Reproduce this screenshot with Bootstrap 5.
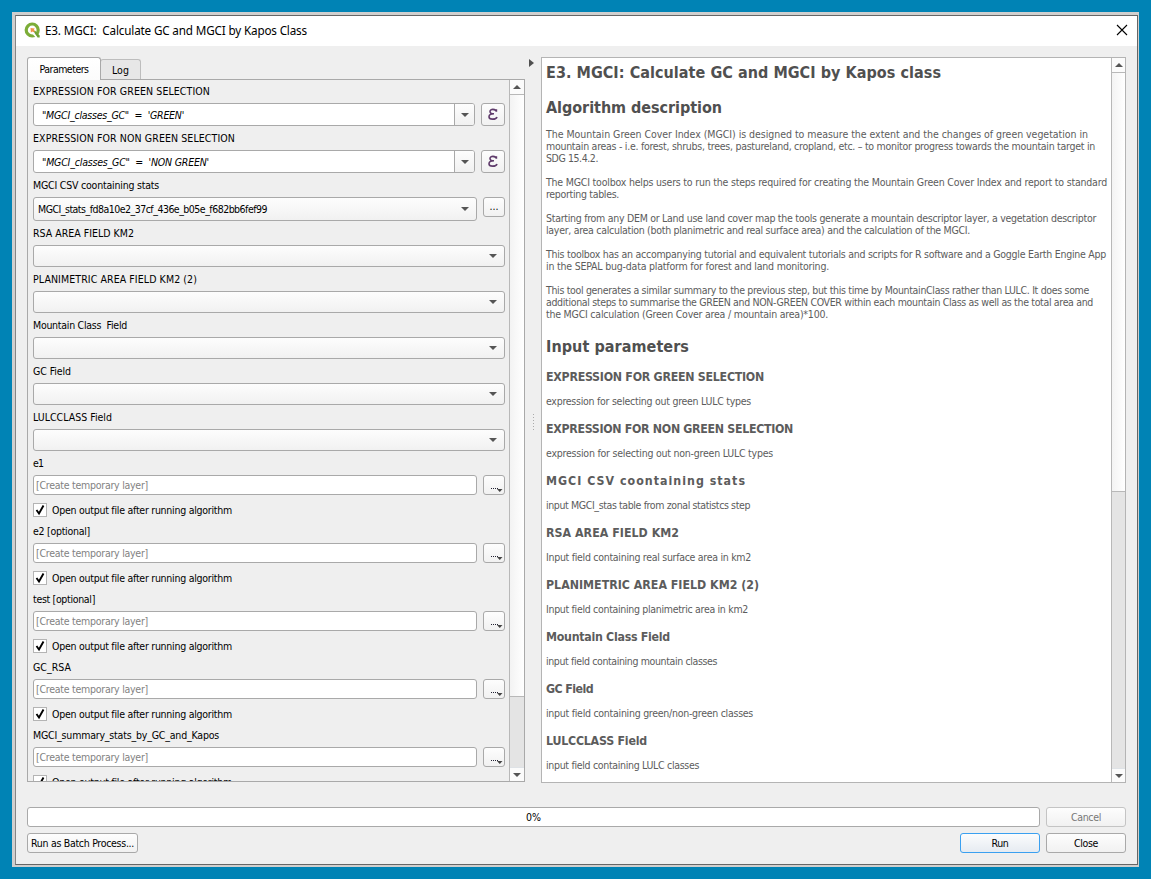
<!DOCTYPE html>
<html lang="en">
<head>
<meta charset="utf-8">
<title>E3. MGCI: Calculate GC and MGCI by Kapos Class</title>
<link href="https://cdn.jsdelivr.net/npm/bootstrap@5.3.0/dist/css/bootstrap.min.css" rel="stylesheet">
<script src="https://cdn.jsdelivr.net/npm/bootstrap@5.3.0/dist/js/bootstrap.bundle.min.js"></script>
<style>
:root{--edge:#a9a9a9;--face:#efefef;--grad:linear-gradient(#fdfdfd,#f1f1f1)}
body{background:#0083b5;font:10.5px/12px "DejaVu Sans Condensed","DejaVu Sans",sans-serif;color:#000;height:879px;padding:12px;overflow:hidden}
.frame{height:855px;border:solid #d0cfce;border-width:3px 1px 2px 3px}
.dialog-box{height:850px;background:var(--face);border:1px solid #666;border-left-color:#858585}
.title-strip{height:30px;background:#fff;padding:0 9px 2px 8px;font:11.7px/28px "Noto Sans","Open Sans",sans-serif}
[data-w]{white-space:pre}
.work{height:736px;padding:11px 11px 0 11px}
.left-side{width:498px}
.tab-item{border:1px solid var(--edge);border-bottom:0;border-radius:3px 3px 0 0;text-align:center}
.tab-item.on{width:74px;height:23px;margin-bottom:-1px;background:linear-gradient(#fff,#fbfbfb);line-height:23px;z-index:1}
.tab-item.off{width:41px;height:20px;margin-left:-1px;background:#e7e7e7;line-height:21px;border-color:#bdbdbd}
.tab-panel{height:703px;border:1px solid var(--edge)}
.fields{width:482px;padding:0 4px 0 5px}
.lbl{height:24px;line-height:24px}
.lbl.first{height:23px;line-height:22px}
.box{background:#fff;border:1px solid var(--edge);border-radius:3px}
.grad{background:var(--grad)}
.expr{width:442px;height:23px;font-style:oblique;line-height:22px;padding-left:8px}
.drop{width:20px;height:21px;border-left:1px solid var(--edge);background:var(--grad);border-radius:0 2px 2px 0}
.eps{width:24px;height:23px}
.combo{height:22px;padding:0 7px 0 4px}
.combo.source{width:444px;height:24px}
.dots{width:22px;height:20px;text-align:center;line-height:17px}
.outp{width:444px;height:20px;line-height:19px;padding-left:2px;color:#828282}
.tick-row{height:24px;padding-top:8px;gap:5px}
.tick-row span{padding-top:1px}
.tick{width:14px;height:14px;background:#fff;border:1px solid #b4b4b4;display:flex}
.caret{width:0;height:0;border:4px solid transparent;border-top-color:#555;border-bottom:0}
.caret.up{border-top:0;border-bottom:4px solid #555}
.sbar{width:15px;border-left:1px solid #b8b8b8;background:#e4e4e4}
.help .sbar{width:14px}
.sbtn{height:14px;background:#fbfbfb}
.thumb{background:linear-gradient(90deg,#f3f3f3,#fff);border:solid #b8b8b8;border-width:1px 0}
.splitter{width:16px;padding:2px 0 0 4px}
.grip{padding:347px 0 0 4px}
.grip i{display:block;width:1px;height:1px;background:#aaa;margin-bottom:2px}
.help{height:726px;background:#fff;border:1px solid #b4b4b4}
.help-text{padding-left:4px;color:#5c5c5c}
.help-text h2{font-size:16px;font-weight:700;line-height:20px;margin:0;color:#505050}
.help-text h3{font-size:12.3px;font-weight:700;line-height:16px;margin:0 0 10px}
.help-text p{margin:0 0 12px}
.help-text p.item{margin-bottom:14px}
.help-text p span{display:block}
.pbar{width:1013px;height:20px;line-height:19px;text-align:center}
.push{height:20px;line-height:19px;text-align:center}
.push.std{width:80px}
.run{border-color:#3aa0f0;background:linear-gradient(#fbfcfd,#e6ebf1)}
</style>
</head>
<body>
<div class="frame"><main class="dialog-box">
  <header class="title-strip d-flex align-items-center">
    <svg width="17" height="17" viewBox="0 0 17 17"><circle cx="8.2" cy="8" r="6" fill="none" stroke="#7cad38" stroke-width="3.2"/><path d="M8.500 8.500 14.500 15.800h-2.500L7.800 11.200z" fill="#fff"/><path d="m9.500 9.300 1.400-.9 4.800 5v2.200H13.600z" fill="#6fa034"/><path d="m6.500 6 4.200.4-.8 1.700 1 1.200-1.200 1-1.400-.9-1.400 1z" fill="#f0954a"/></svg>
    <span class="ms-1" data-w="262">E3. MGCI:  Calculate GC and MGCI by Kapos Class</span>
    <svg class="ms-auto" width="12" height="12" viewBox="0 0 12 12"><path d="m1 1 10 10M11 1 1 11" stroke="#000" stroke-width="1.1"/></svg>
  </header>
  <section class="work d-flex">
    <div class="left-side">
      <nav class="d-flex align-items-end">
        <div class="tab-item on position-relative"><span data-w="49">Parameters</span></div><div class="tab-item off"><span data-w="17">Log</span></div>
      </nav>
      <div class="tab-panel d-flex">
        <div class="fields overflow-hidden" id="fields"></div>
        <div class="sbar d-flex flex-column">
          <div class="sbtn d-flex align-items-center justify-content-center"><i class="caret up"></i></div>
          <div class="thumb" style="height:603px"></div><div class="flex-fill"></div>
          <div class="sbtn border-top d-flex align-items-center justify-content-center"><i class="caret"></i></div>
        </div>
      </div>
    </div>
    <div class="splitter">
      <svg class="d-block" width="5" height="8"><path d="M0 0 5 4 0 8z" fill="#505050"/></svg>
      <div class="grip"><i></i><i></i><i></i><i></i><i></i><i></i></div>
    </div>
    <article class="help d-flex flex-fill">
      <div class="help-text flex-fill overflow-hidden" id="help">
        <h2 style="margin:5px 0 15px"><span data-w="395">E3. MGCI: Calculate GC and MGCI by Kapos class</span></h2>
        <h2 style="margin-bottom:10px"><span data-w="176">Algorithm description</span></h2>
        <p><span data-w="542">The Mountain Green Cover Index (MGCI) is designed to measure the extent and the changes of green vegetation in</span><span data-w="549">mountain areas - i.e. forest, shrubs, trees, pastureland, cropland, etc. – to monitor progress towards the mountain target in</span><span data-w="52">SDG 15.4.2.</span></p>
        <p><span data-w="561">The MGCI toolbox helps users to run the steps required for creating the Mountain Green Cover Index and report to standard</span><span data-w="73">reporting tables.</span></p>
        <p><span data-w="550">Starting from any DEM or Land use land cover map the tools generate a mountain descriptor layer, a vegetation descriptor</span><span data-w="424">layer, area calculation (both planimetric and real surface area) and the calculation of the MGCI.</span></p>
        <p><span data-w="560">This toolbox has an accompanying tutorial and equivalent tutorials and scripts for R software and a Goggle Earth Engine App</span><span data-w="283">in the SEPAL bug-data platform for forest and land monitoring.</span></p>
        <p><span data-w="543">This tool generates a similar summary to the previous step, but this time by MountainClass rather than LULC. It does some</span><span data-w="547">additional steps to summarise the GREEN and NON-GREEN COVER within each mountain Class as well as the total area and</span><span data-w="282">the MGCI calculation (Green Cover area / mountain area)*100.</span></p>
        <h2 style="margin:17px 0 12px"><span data-w="143">Input parameters</span></h2>
      </div>
      <div class="sbar d-flex flex-column">
        <div class="sbtn d-flex align-items-center justify-content-center"><i class="caret up"></i></div>
        <div class="thumb" style="height:420px"></div><div class="flex-fill"></div>
        <div class="sbtn border-top d-flex align-items-center justify-content-center"><i class="caret"></i></div>
      </div>
    </article>
  </section>
  <footer style="padding-top:25px;margin:0 11px">
    <div class="d-flex justify-content-between"><div class="box pbar"><span data-w="15">0%</span></div><div class="box grad push std" style="color:#777;border-color:#c4c4c4"><span data-w="30">Cancel</span></div></div>
    <div class="d-flex" style="margin-top:6px;gap:6px"><div class="box grad push me-auto" style="width:111px"><span data-w="103">Run as Batch Process...</span></div><div class="box push std run"><span data-w="17">Run</span></div><div class="box grad push std"><span data-w="24">Close</span></div></div>
  </footer>
</main></div>
<script>
const txt = (t, w) => `<span data-w="${w}">${t}</span>`;
const caret = '<i class="caret"></i>';
let html = '';
[['EXPRESSION FOR GREEN SELECTION',177,'"MGCI_classes_GC"  =  \'GREEN\'',142],
 ['EXPRESSION FOR NON GREEN SELECTION',202,'"MGCI_classes_GC"  =  \'NON GREEN\'',167]].forEach(([l,w,e,ew],i) => {
  html += `<div class="lbl ${i ? '' : 'first'}">${txt(l,w)}</div><div class="d-flex justify-content-between"><div class="box expr d-flex justify-content-between">${txt(e,ew)}<div class="drop d-flex align-items-center justify-content-center">${caret}</div></div>
  <div class="box grad eps d-flex align-items-center justify-content-center"><svg width="10" height="13" viewBox="0 0 10 13"><path d="M8.300 3.400C7.800 .8 2 .5 2 3.400c0 1.700 1.700 2.300 4 2.300C3 5.700 1 6.700 1 8.700c0 3.300 7 3.200 8 .2M8.400 1.200v2.600" fill="none" stroke="#5f3b6b" stroke-width="1.600"/></svg></div></div>`;
});
html += `<div class="lbl">${txt('MGCI CSV coontaining stats',126)}</div><div class="d-flex justify-content-between"><div class="box grad combo source d-flex align-items-center justify-content-between">${txt('MGCI_stats_fd8a10e2_37cf_436e_b05e_f682bb6fef99',229)}${caret}</div><div class="box grad dots">...</div></div>`;
[['RSA AREA FIELD KM2',101],['PLANIMETRIC AREA FIELD KM2 (2)',164],['Mountain Class  Field',94],['GC Field',38],['LULCCLASS Field',79]].forEach(([l,w]) => {
  html += `<div class="lbl">${txt(l,w)}</div><div class="box grad combo d-flex align-items-center justify-content-end">${caret}</div>`;
});
[['e1',10],['e2 [optional]',57],['test [optional]',62],['GC_RSA',38],['MGCI_summary_stats_by_GC_and_Kapos',186]].forEach(([l,w]) => {
  html += `<div class="lbl">${txt(l,w)}</div><div class="d-flex justify-content-between"><div class="box outp">${txt('[Create temporary layer]',112)}</div><div class="box grad dots d-flex align-items-end justify-content-end"><svg width="15" height="10"><path d="M2 4.500h1m1 0h1m1 0h1m1 0h1" stroke="#223" stroke-width="1.200"/><path d="M8 5h5.500L10.750 8z" fill="#444"/></svg></div></div>
  <div class="tick-row d-flex"><div class="tick"><svg width="12" height="12"><path d="M2.500 6 5 9.500 9.500 1.500" fill="none" stroke="#000" stroke-width="1.900"/></svg></div>${txt('Open output file after running algorithm',180)}</div>`;
});
document.getElementById('fields').innerHTML = html;
document.getElementById('help').innerHTML += [
 ['EXPRESSION FOR GREEN SELECTION',218,'expression for selecting out green LULC types',205],
 ['EXPRESSION FOR NON GREEN SELECTION',247,'expression for selecting out non-green LULC types',227],
 ['MGCI CSV coontaining stats',200,'input MGCI_stas table from zonal statistcs step',204],
 ['RSA AREA FIELD KM2',133,'Input field containing real surface area in km2',205],
 ['PLANIMETRIC AREA FIELD KM2 (2)',213,'Input field containing planimetric area in km2',202],
 ['Mountain Class Field',124,'input field containing mountain classes',171],
 ['GC Field',47,'input field containing green/non-green classes',207],
 ['LULCCLASS Field',101,'input field containing LULC classes',153]
].map(([h,w,p,pw]) => `<h3>${txt(h,w)}</h3><p class="item">${txt(p,pw)}</p>`).join('');
// Track each run of text so that it fills the width it was designed for.
document.querySelectorAll('[data-w]').forEach(el => {
  const r = document.createRange(); r.selectNodeContents(el);
  el.style.letterSpacing = (el.dataset.w - r.getBoundingClientRect().width) / el.textContent.length + 'px';
});
</script>
</body>
</html>
